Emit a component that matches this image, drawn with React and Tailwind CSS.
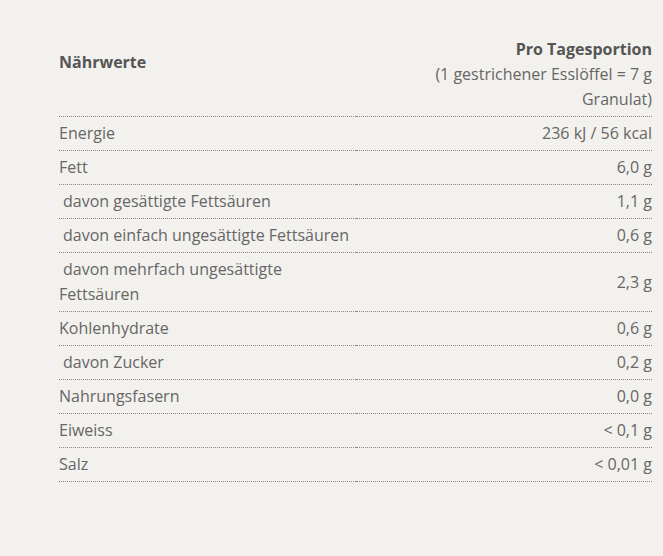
const rows = [
  { label: "Energie", value: "236 kJ / 56 kcal" },
  { label: "Fett", value: "6,0 g" },
  { label: "davon gesättigte Fettsäuren", value: "1,1 g", sub: true },
  { label: "davon einfach ungesättigte Fettsäuren", value: "0,6 g", sub: true },
  { label: "davon mehrfach ungesättigte Fettsäuren", value: "2,3 g", sub: true },
  { label: "Kohlenhydrate", value: "0,6 g" },
  { label: "davon Zucker", value: "0,2 g", sub: true },
  { label: "Nahrungsfasern", value: "0,0 g" },
  { label: "Eiweiss", value: "< 0,1 g" },
  { label: "Salz", value: "< 0,01 g" },
];

export default function App() {
  return (
    <div
      className="min-h-screen bg-[#f3f1ed] pt-[33px] pl-[59px] pr-[11px] text-[16px] leading-[25px] text-[#666]"
      style={{ fontFamily: '"Open Sans", sans-serif' }}
    >
      <table className="w-full border-collapse">
        <tbody>
          <tr className="border-b border-dotted border-[#888]">
            <td className="w-1/2 pt-[17px] pb-[4px] align-top font-bold text-[#555]">
              Nährwerte
            </td>
            <td className="w-1/2 py-[4px] pl-[70px] text-right">
              <div className="font-bold text-[#555]">Pro Tagesportion</div>
              <div>(1 gestrichener Esslöffel = 7 g Granulat)</div>
            </td>
          </tr>
          {rows.map((r) => (
            <tr key={r.label} className="border-b border-dotted border-[#888]">
              <td className={"py-[4px] align-middle " + (r.sub ? "indent-[4px]" : "")}>
                {r.label}
              </td>
              <td className="py-[4px] text-right align-middle">{r.value}</td>
            </tr>
          ))}
        </tbody>
      </table>
    </div>
  );
}
